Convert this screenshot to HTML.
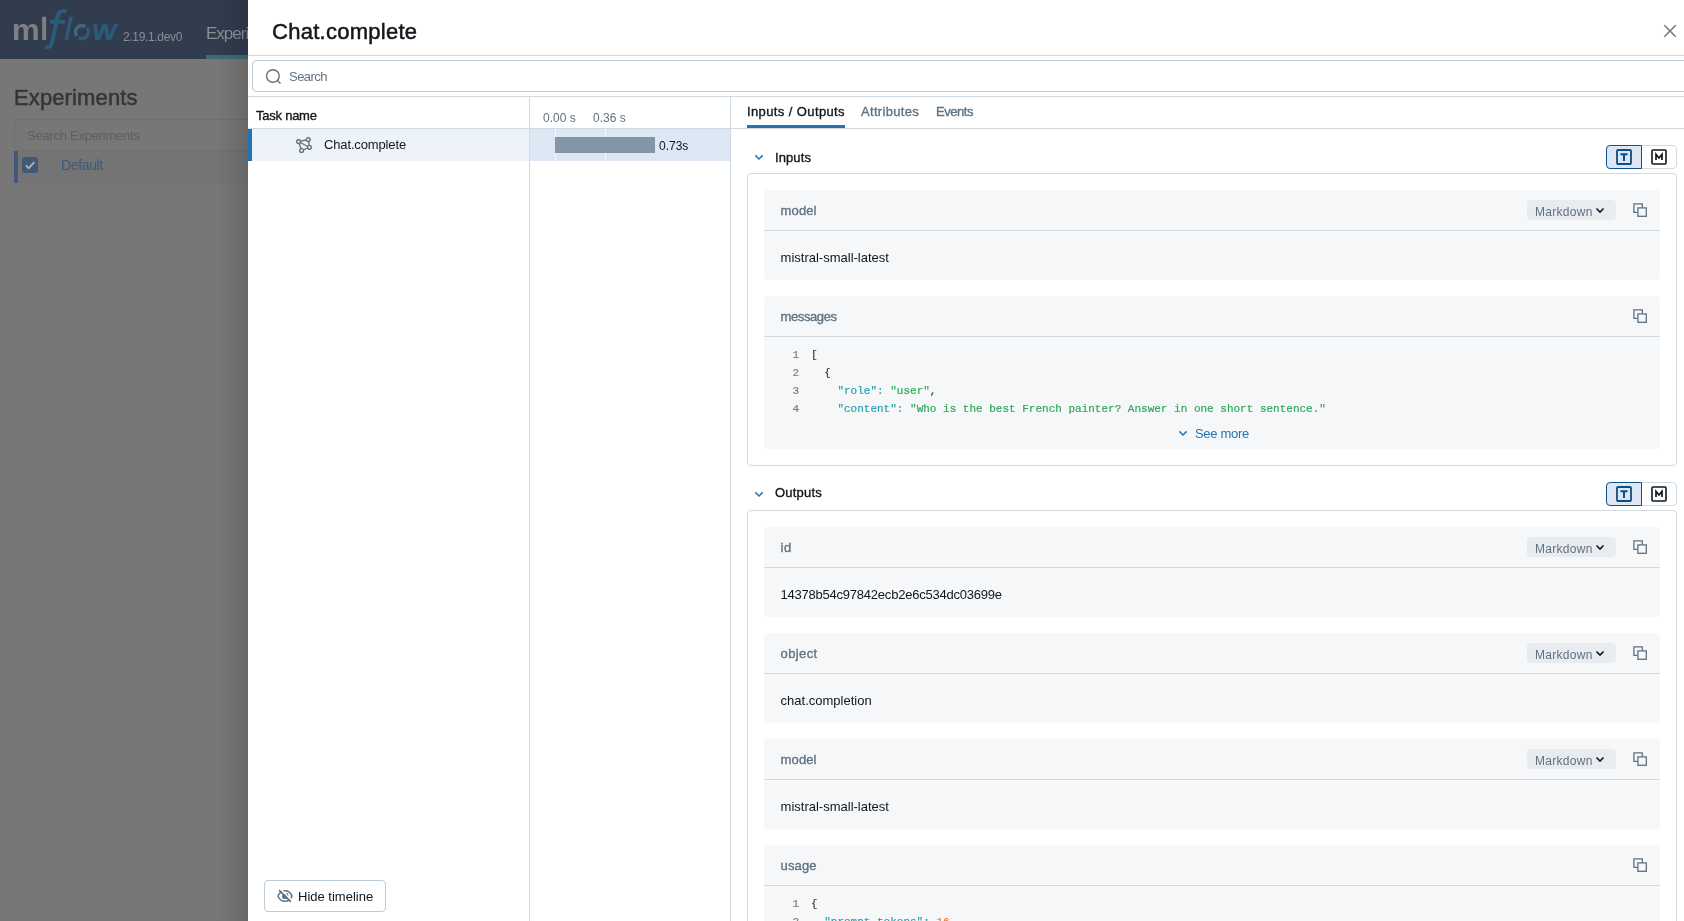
<!DOCTYPE html>
<html>
<head>
<meta charset="utf-8">
<title>MLflow</title>
<style>
*{box-sizing:border-box;margin:0;padding:0}
html,body{width:1684px;height:921px;overflow:hidden;background:#777;font-family:"Liberation Sans",sans-serif;color:#11171c}
.abs{position:absolute}
#drawer,#bg{will-change:transform}
.sb{font-weight:normal;-webkit-text-stroke:0.35px currentColor}
svg{position:absolute;overflow:visible}
#bg{position:absolute;left:0;top:0;width:248px;height:921px;background:#777;overflow:hidden}
#shadow{position:absolute;left:214px;top:0;width:34px;height:921px;background:linear-gradient(to right,rgba(0,0,0,0),rgba(0,0,0,0.04) 40%,rgba(0,0,0,0.13))}
#nav{position:absolute;left:0;top:0;width:248px;height:59px;background:#323c4f}
#nav .ver{position:absolute;left:123px;top:30px;font-size:12px;color:#8a8e96;letter-spacing:-0.34px}
#nav .exp{position:absolute;left:206px;top:24px;font-size:17px;color:#8a8e96;letter-spacing:-1px}
#nav .ul{position:absolute;left:206px;top:55px;width:42px;height:4px;background:#3f6b76}
#bg h1{position:absolute;left:14px;top:85px;font-size:22px;font-weight:normal;-webkit-text-stroke:0.5px #3a3333;color:#3a3333;letter-spacing:0.12px}
#bg .sbox{position:absolute;left:14px;top:119px;width:260px;height:32px;border:1px solid #6f6f6f;border-radius:4px;font-size:13px;color:#5e5e5e;padding:8px 12px;letter-spacing:-0.25px}
#bg .row{position:absolute;left:14px;top:151px;width:234px;height:32px;background:#747474;border-left:4px solid #3e5a78}
#bg .cb{position:absolute;left:22px;top:157px;width:16px;height:16px;background:#3f5a76;border-radius:3px}
#bg .def{position:absolute;left:61px;top:157px;font-size:14px;color:#3c5a7a;letter-spacing:-0.35px}

#drawer{position:absolute;left:248px;top:0;width:1436px;height:921px;background:#fff}
.hline{position:absolute;height:1px;background:#d1d9e1}
.vline{position:absolute;width:1px;background:#d1d9e1}
#title{position:absolute;left:24px;top:19px;font-size:22px;font-weight:normal;-webkit-text-stroke:0.5px #11171c;color:#11171c;letter-spacing:0.27px}
#search{position:absolute;left:4px;top:60px;width:1500px;height:32px;border:1px solid #bccad6;border-radius:4px}
#search span{position:absolute;left:36px;top:8px;font-size:13px;color:#5f7281;letter-spacing:-0.53px}
.sec{color:#5f7281}
#taskname{position:absolute;left:8px;top:108px;font-size:13px;font-weight:normal;-webkit-text-stroke:0.35px #11171c;letter-spacing:-0.24px}
#rowsel{position:absolute;left:0;top:129px;width:281px;height:32px;background:#eef3fa;border-left:4px solid #2272b4}
#rowsel span{position:absolute;left:72px;top:8px;font-size:13px;letter-spacing:-0.14px}
#tlsel{position:absolute;left:282px;top:129px;width:200px;height:32px;background:#dce7f3}
#bar{position:absolute;left:307px;top:137px;width:100px;height:16px;background:#8396a5}
.tick{position:absolute;font-size:12px;color:#5f7281;top:111px}
#hidebtn{position:absolute;left:16px;top:880px;width:122px;height:32px;border:1px solid #bccad6;border-radius:4px;font-size:13px}
#hidebtn span{position:absolute;left:33px;top:8px}

.tab{position:absolute;top:104px;font-size:13px;font-weight:normal;-webkit-text-stroke:0.35px currentColor}
.sechd{position:absolute;font-size:13px;font-weight:normal;-webkit-text-stroke:0.35px currentColor}
.box{position:absolute;left:499px;width:930px;border:1px solid #d1d9e1;border-radius:4px}
.card{position:absolute;left:516px;width:896px;background:#f6f7f9;border-radius:4px;overflow:hidden}
.card .hd{position:absolute;left:0;top:0;width:100%;height:41px;border-bottom:1px solid #d1d9e1}
.card .k{position:absolute;left:16.6px;top:13px;font-size:13px;font-weight:normal;-webkit-text-stroke:0.35px #5f7281;color:#5f7281}
.card .v{position:absolute;left:16.6px;top:60px;font-size:13px;color:#11171c}
.md{position:absolute;left:763px;top:10px;width:89px;height:20px;background:#e8ecf0;border-radius:4px;font-size:12px;color:#5f7281;padding:5px 0 0 8px;letter-spacing:0.3px}
.code{position:absolute;left:0;top:50px;font-family:"Liberation Mono",monospace;font-size:11px;line-height:18px;white-space:pre;color:#3b3b3b;-webkit-text-stroke:0.2px currentColor}
.code .ln{display:inline-block;width:35px;text-align:right;color:#7d7d7d;margin-right:12px}
.ck{color:#2a9faf;-webkit-text-stroke:0.2px #2a9faf}.cs{color:#2fa85a;-webkit-text-stroke:0.2px #2fa85a}.cn{color:#e8792b;-webkit-text-stroke:0.2px #e8792b}.code .ln{-webkit-text-stroke:0.2px #7d7d7d}
.tog{position:absolute;left:1358px;width:71px;height:24px;border:1px solid #d1d9e1;border-radius:4px}
.tog .t{position:absolute;left:-1px;top:-1px;width:36px;height:24px;background:#dce7f3;border:1px solid #0e538b;border-radius:4px 0 0 4px}
</style>
</head>
<body>
<div id="bg">
  <div id="nav">
    <svg id="logo" style="left:0;top:0" width="130" height="58" viewBox="0 0 130 58">
      <defs><clipPath id="cw"><rect x="90" y="24.1" width="32" height="15.95"/></clipPath><clipPath id="cl"><rect x="60" y="16.4" width="16" height="23.65"/></clipPath></defs>
      <text x="11.7" y="40" font-family="Liberation Sans" font-weight="bold" font-size="29.5" fill="#808080" textLength="28" lengthAdjust="spacingAndGlyphs">m</text>
      <rect x="42.2" y="16.8" width="3.9" height="23.2" fill="#808080"/>
      <g fill="none" stroke="#2b5b77" stroke-width="4" stroke-linecap="butt">
        <path d="M66.5 11.2 C58 9.5 57.5 16 56.5 21.5 L52.5 40 C51 47 49.5 48 45 46.6"/>
        <path d="M50 21.8 H65"/>
        <path d="M71.6 14.4 L65.7 42" stroke-width="3.6" clip-path="url(#cl)"/>
        <path d="M94.6 21 L97.2 41.2 L105.3 23 L108.5 41.2 L117.2 21.8" stroke-linejoin="miter" stroke-miterlimit="20" stroke-width="3.7" clip-path="url(#cw)"/>
      </g>
      <path d="M85.44 26.68 A6.4 6.4 0 0 0 76.84 35.9" fill="none" stroke="#3f6b76" stroke-width="3.4"/>
      <path d="M86.78 27.85 A6.4 6.4 0 0 1 78.46 37.42" fill="none" stroke="#2b5b77" stroke-width="3.4"/>
    </svg>
    <div class="ver">2.19.1.dev0</div><div class="exp">Experiments</div><div class="ul"></div>
  </div>
  <h1>Experiments</h1>
  <div class="sbox">Search Experiments</div>
  <div class="row"></div><div class="cb"></div>
  <svg style="left:22px;top:157px" width="16" height="16" viewBox="0 0 16 16"><path d="M3.8 8.3 L6.8 11.2 L12.2 5.2" fill="none" stroke="#b4b4b4" stroke-width="1.8"/></svg>
  <div class="def">Default</div>
  <div id="shadow"></div>
</div>
<div id="drawer">
  <div id="title">Chat.complete</div>
  <svg style="left:1416px;top:25px" width="12" height="12" viewBox="0 0 12 12"><path d="M0.3 0.3 L11.7 11.7 M11.7 0.3 L0.3 11.7" stroke="#5f7281" stroke-width="1.4" fill="none"/></svg>
  <div class="hline" style="left:0;top:55px;width:1436px"></div>
  <div id="search"><span>Search</span></div>
  <svg style="left:16px;top:68px" width="18" height="18" viewBox="0 0 18 18"><circle cx="8.9" cy="8" r="6.3" fill="none" stroke="#5f7281" stroke-width="1.4"/><path d="M13.4 12.6 L16.5 15.6" stroke="#5f7281" stroke-width="1.4"/></svg>
  <div class="hline" style="left:0;top:96px;width:1436px"></div>

  <div id="taskname">Task name</div>
  <div class="hline" style="left:0;top:128px;width:482px"></div>
  <div id="rowsel"><span>Chat.complete</span></div>
  <svg style="left:48px;top:137px" width="16" height="16" viewBox="0 0 16 16" fill="none" stroke="#5f7281" stroke-width="1.35">
    <circle cx="2.6" cy="4.6" r="1.9"/><circle cx="12.3" cy="2.6" r="1.9"/><circle cx="13.4" cy="10.3" r="1.9"/><circle cx="5.6" cy="13.5" r="1.9"/>
    <path d="M4.5 4.2 L10.4 3 M4.3 5.5 L11.7 9.5 M3.2 6.4 L5 11.7 M12.6 4.5 L13.1 8.4 M11.6 11 L7.4 12.8"/>
  </svg>
  <div id="tlsel"></div>
  <div class="abs" style="left:307px;top:129px;width:1px;height:32px;background:#f6f9fd"></div>
  <div class="abs" style="left:357px;top:129px;width:1px;height:32px;background:#f6f9fd"></div>
  <div id="bar"></div>
  <div class="abs" style="left:411px;top:139px;font-size:12px">0.73s</div>
  <div class="tick" style="left:295px">0.00 s</div>
  <div class="tick" style="left:345px">0.36 s</div>
  <div class="vline" style="left:281px;top:97px;height:824px"></div>
  <div class="vline" style="left:482px;top:97px;height:824px"></div>
  <div id="hidebtn"><span>Hide timeline</span></div>
  <svg style="left:29px;top:888px" width="16" height="16" viewBox="0 0 16 16" fill="none" stroke="#5f7281" stroke-width="1.5">
    <path d="M0.9 8 C2.6 4.2 5.2 2.7 8 2.7 C10.8 2.7 13.4 4.2 15.1 8 C13.4 11.8 10.8 13.3 8 13.3 C5.2 13.3 2.6 11.8 0.9 8 Z"/>
    <circle cx="7.8" cy="8.4" r="2.7" fill="#5f7281" stroke="none"/>
    <path d="M3.4 0.9 L15.2 12.7" stroke="#fff" stroke-width="1.5"/>
    <path d="M2 2.1 L13.8 13.9" stroke-width="1.6"/>
    <path d="M9.3 5.3 A3.2 3.2 0 0 1 11.1 7.3" stroke-width="1.1"/>
  </svg>

  <div class="tab" style="left:499px;letter-spacing:0.39px">Inputs / Outputs</div>
  <div class="tab sec" style="left:613px;letter-spacing:0.31px">Attributes</div>
  <div class="tab sec" style="left:688px;letter-spacing:-0.46px">Events</div>
  <div class="abs" style="left:499px;top:125px;width:98px;height:3px;background:#2272b4"></div>
  <div class="hline" style="left:483px;top:128px;width:953px"></div>

  <svg style="left:507px;top:155px" width="8" height="5" viewBox="0 0 8 5"><path d="M0.4 0.4 L4 4 L7.6 0.4" fill="none" stroke="#2272b4" stroke-width="1.5"/></svg>
  <div class="sechd" style="left:527px;top:150px;letter-spacing:0.1px">Inputs</div>
  <div class="tog" style="top:145px"><div class="t"></div><svg style="left:9px;top:3px" width="16" height="16" viewBox="0 0 16 16"><rect x="1" y="1" width="14" height="14" rx="1" fill="none" stroke="#0e4d82" stroke-width="1.8"/><path d="M4.4 5.2 H11.6 M8 5.2 V12" stroke="#0e4d82" stroke-width="2" fill="none"/></svg><svg style="left:44px;top:3px" width="16" height="16" viewBox="0 0 16 16"><rect x="1" y="1" width="14" height="14" rx="1" fill="none" stroke="#11171c" stroke-width="1.6"/><path d="M5 11.1 V5.4 L8 9 L11 5.4 V11.1" stroke="#11171c" stroke-width="1.7" fill="none" stroke-linejoin="miter"/></svg></div>
  <div class="box" style="top:173px;height:293px"></div>
  <div class="card" style="top:190px;height:90px"><div class="hd"></div><svg style="left:868px;top:12px" width="16" height="16" viewBox="0 0 16 16" fill="none" stroke="#5f7281" stroke-width="1.3"><path d="M5.4 10.3 H1.9 V1.9 H10.3 V5.4"/><rect x="5.9" y="5.9" width="8.4" height="8.4"/></svg><div class="k" style="letter-spacing:0.12px">model</div><div class="md">Markdown<svg style="left:69px;top:8px" width="8" height="5" viewBox="0 0 8 5"><path d="M0.5 0.5 L4 4 L7.5 0.5" fill="none" stroke="#11171c" stroke-width="1.6"/></svg></div><div class="v">mistral-small-latest</div></div>
  <div class="card" style="top:296px;height:153px"><div class="hd"></div><svg style="left:868px;top:12px" width="16" height="16" viewBox="0 0 16 16" fill="none" stroke="#5f7281" stroke-width="1.3"><path d="M5.4 10.3 H1.9 V1.9 H10.3 V5.4"/><rect x="5.9" y="5.9" width="8.4" height="8.4"/></svg><div class="k" style="letter-spacing:-0.41px">messages</div>
<div class="code"><span class="ln">1</span>[
<span class="ln">2</span>  {
<span class="ln">3</span>    <span class="ck">"role":</span> <span class="cs">"user"</span>,
<span class="ln">4</span>    <span class="ck">"content":</span> <span class="cs">"Who is the best French painter? Answer in one short sentence."</span></div>
  <svg style="left:415px;top:135px" width="8" height="5" viewBox="0 0 8 5"><path d="M0.4 0.4 L4 4 L7.6 0.4" fill="none" stroke="#2272b4" stroke-width="1.5"/></svg><div class="abs" style="left:431px;top:130px;font-size:13px;letter-spacing:-0.3px;color:#2272b4">See more</div>
  </div>

  <svg style="left:507px;top:492px" width="8" height="5" viewBox="0 0 8 5"><path d="M0.4 0.4 L4 4 L7.6 0.4" fill="none" stroke="#2272b4" stroke-width="1.5"/></svg>
  <div class="sechd" style="left:527px;top:485px;letter-spacing:0.21px">Outputs</div>
  <div class="tog" style="top:482px"><div class="t"></div><svg style="left:9px;top:3px" width="16" height="16" viewBox="0 0 16 16"><rect x="1" y="1" width="14" height="14" rx="1" fill="none" stroke="#0e4d82" stroke-width="1.8"/><path d="M4.4 5.2 H11.6 M8 5.2 V12" stroke="#0e4d82" stroke-width="2" fill="none"/></svg><svg style="left:44px;top:3px" width="16" height="16" viewBox="0 0 16 16"><rect x="1" y="1" width="14" height="14" rx="1" fill="none" stroke="#11171c" stroke-width="1.6"/><path d="M5 11.1 V5.4 L8 9 L11 5.4 V11.1" stroke="#11171c" stroke-width="1.7" fill="none" stroke-linejoin="miter"/></svg></div>
  <div class="box" style="top:510px;height:500px"></div>
  <div class="card" style="top:527px;height:90px"><div class="hd"></div><svg style="left:868px;top:12px" width="16" height="16" viewBox="0 0 16 16" fill="none" stroke="#5f7281" stroke-width="1.3"><path d="M5.4 10.3 H1.9 V1.9 H10.3 V5.4"/><rect x="5.9" y="5.9" width="8.4" height="8.4"/></svg><div class="k" style="letter-spacing:0.44px">id</div><div class="md">Markdown<svg style="left:69px;top:8px" width="8" height="5" viewBox="0 0 8 5"><path d="M0.5 0.5 L4 4 L7.5 0.5" fill="none" stroke="#11171c" stroke-width="1.6"/></svg></div><div class="v" style="letter-spacing:-0.23px">14378b54c97842ecb2e6c534dc03699e</div></div>
  <div class="card" style="top:633px;height:90px"><div class="hd"></div><svg style="left:868px;top:12px" width="16" height="16" viewBox="0 0 16 16" fill="none" stroke="#5f7281" stroke-width="1.3"><path d="M5.4 10.3 H1.9 V1.9 H10.3 V5.4"/><rect x="5.9" y="5.9" width="8.4" height="8.4"/></svg><div class="k" style="letter-spacing:0.38px">object</div><div class="md">Markdown<svg style="left:69px;top:8px" width="8" height="5" viewBox="0 0 8 5"><path d="M0.5 0.5 L4 4 L7.5 0.5" fill="none" stroke="#11171c" stroke-width="1.6"/></svg></div><div class="v">chat.completion</div></div>
  <div class="card" style="top:739px;height:90px"><div class="hd"></div><svg style="left:868px;top:12px" width="16" height="16" viewBox="0 0 16 16" fill="none" stroke="#5f7281" stroke-width="1.3"><path d="M5.4 10.3 H1.9 V1.9 H10.3 V5.4"/><rect x="5.9" y="5.9" width="8.4" height="8.4"/></svg><div class="k" style="letter-spacing:0.12px">model</div><div class="md">Markdown<svg style="left:69px;top:8px" width="8" height="5" viewBox="0 0 8 5"><path d="M0.5 0.5 L4 4 L7.5 0.5" fill="none" stroke="#11171c" stroke-width="1.6"/></svg></div><div class="v">mistral-small-latest</div></div>
  <div class="card" style="top:845px;height:152px"><div class="hd"></div><svg style="left:868px;top:12px" width="16" height="16" viewBox="0 0 16 16" fill="none" stroke="#5f7281" stroke-width="1.3"><path d="M5.4 10.3 H1.9 V1.9 H10.3 V5.4"/><rect x="5.9" y="5.9" width="8.4" height="8.4"/></svg><div class="k" style="letter-spacing:0.12px">usage</div>
<div class="code"><span class="ln">1</span>{
<span class="ln">2</span>  <span class="ck">"prompt_tokens":</span> <span class="cn">16</span>,</div>
  </div>
</div>
</body>
</html>
